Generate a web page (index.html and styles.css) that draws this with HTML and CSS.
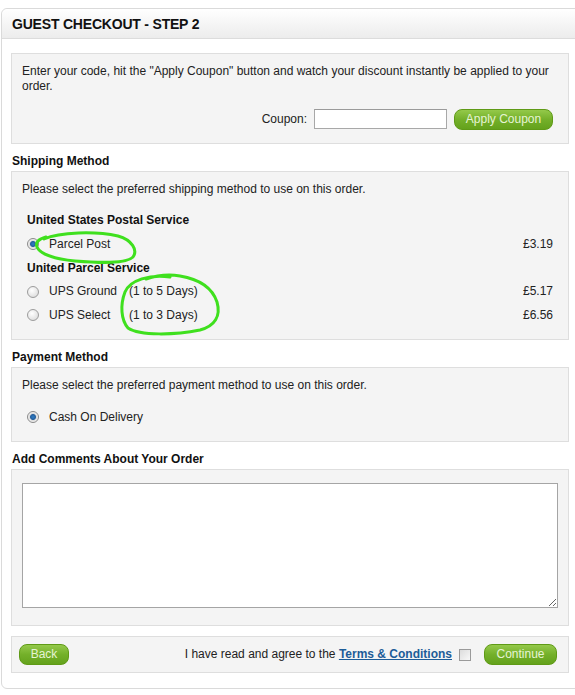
FILE: index.html
```html
<!DOCTYPE html>
<html>
<head>
<meta charset="utf-8">
<title>Guest Checkout - Step 2</title>
<link rel="stylesheet" href="styles.css">
</head>
<body>
<div class="page">
  <div class="panel">
    <div class="panel-head"><h1>GUEST CHECKOUT - STEP 2</h1></div>
    <div class="panel-body">
      <div class="box coupon-box">
        <p class="intro">Enter your code, hit the "Apply Coupon" button and watch your discount instantly be applied to your order.</p>
        <div class="coupon-row">
          <label class="coupon-label">Coupon:</label>
          <input class="coupon-input" type="text">
          <button class="btn btn-apply">Apply Coupon</button>
        </div>
      </div>

      <h2 class="section-title">Shipping Method</h2>
      <div class="box">
        <p class="desc">Please select the preferred shipping method to use on this order.</p>
        <div class="options">
          <div class="opt-row opt-head h23">United States Postal Service</div>
          <div class="opt-row h24">
            <span class="radio checked"></span><span class="opt-name">Parcel Post</span><span class="opt-note"></span><span class="price">£3.19</span>
          </div>
          <div class="opt-row opt-head h24">United Parcel Service</div>
          <div class="opt-row h23">
            <span class="radio"></span><span class="opt-name">UPS Ground</span><span class="opt-note">(1 to 5 Days)</span><span class="price">£5.17</span>
          </div>
          <div class="opt-row h24">
            <span class="radio"></span><span class="opt-name">UPS Select</span><span class="opt-note">(1 to 3 Days)</span><span class="price">£6.56</span>
          </div>
        </div>
      </div>

      <h2 class="section-title">Payment Method</h2>
      <div class="box">
        <p class="desc">Please select the preferred payment method to use on this order.</p>
        <div class="options">
          <div class="opt-row h24">
            <span class="radio checked"></span><span class="opt-name wide">Cash On Delivery</span>
          </div>
        </div>
      </div>

      <h2 class="section-title">Add Comments About Your Order</h2>
      <div class="box comments-box">
        <textarea class="comments"></textarea>
      </div>

      <div class="box actions">
        <button class="btn btn-back">Back</button>
        <div class="agree">
          <span>I have read and agree to the <a class="terms" href="#">Terms &amp; Conditions</a></span>
          <span class="checkbox"></span>
          <button class="btn btn-continue">Continue</button>
        </div>
      </div>
    </div>
  </div>

  <svg class="marks" width="575" height="695" viewBox="0 0 575 695">
    <path d="M44 239 C60 232 95 231 118 236 C132 240 138 250 133 257 C126 264 100 263 75 261 C55 259 40 254 37 247 C35 242 39 239 46 237" />
    <path d="M170 277 C150 274 130 280 125 292 C120 305 121 320 128 328 C140 336 175 335 200 330 C215 326 221 316 217 302 C212 287 198 279 180 276 C168 274 155 276 146 279" />
  </svg>
</div>
</body>
</html>
```

FILE: styles.css
```css
html, body {
  margin: 0;
  padding: 0;
  background: #ffffff;
}

body {
  font-family: "Liberation Sans", Arial, sans-serif;
  font-size: 12px;
  line-height: 15px;
  color: #222222;
}

.page {
  position: relative;
  width: 575px;
  height: 695px;
  overflow: hidden;
}

.panel {
  margin: 8px 0 0 1px;
  width: 620px;
  border: 1px solid #dadada;
  border-radius: 6px;
  background: #ffffff;
}

.panel-head {
  height: 29px;
  border-bottom: 1px solid #dcdcdc;
  border-radius: 6px 0 0 0;
  background: linear-gradient(#ffffff, #ececec);
  display: flex;
  align-items: center;
}

.panel-head h1 {
  margin: 0 0 0 10px;
  font-size: 14px;
  font-weight: bold;
  color: #111111;
  line-height: 16px;
  letter-spacing: -0.2px;
}

.panel-body {
  width: 558px;
  padding: 14px 0 15px 9px;
}

.box {
  border: 1px solid #dedede;
  background: #f4f4f4;
  padding: 10px 10px 12px 10px;
}

.coupon-box {
  padding-bottom: 14px;
}

.intro, .desc {
  margin: 0;
}

.desc {
  margin-bottom: 12px;
}

.coupon-row {
  margin-top: 15px;
  display: flex;
  justify-content: flex-end;
  align-items: center;
  padding-right: 5px;
  height: 20px;
}

.coupon-label {
  margin-right: 7px;
}

.coupon-input {
  box-sizing: border-box;
  width: 133px;
  height: 20px;
  margin: 0 7px 0 0;
  border: 1px solid #a8a8a8;
  border-top-color: #9a9a9a;
  background: #ffffff;
  padding: 0 3px;
}

.btn {
  box-sizing: border-box;
  height: 21px;
  border: 1px solid #5f9a16;
  border-radius: 8px;
  background: linear-gradient(#94c94a, #74b02a 50%, #64a21c);
  color: #e6f4d4;
  font-family: "Liberation Sans", Arial, sans-serif;
  font-size: 12px;
  padding: 0;
  line-height: 19px;
  text-align: center;
}

.btn-apply {
  width: 99px;
}

.btn-back {
  width: 50px;
}

.btn-continue {
  width: 73px;
  margin-left: 13px;
}

.section-title {
  margin: 10px 0 2px 1px;
  font-size: 12px;
  font-weight: bold;
  line-height: 15px;
  color: #111111;
}

.options {
  padding: 0 5px;
}

.opt-row {
  display: flex;
  align-items: center;
}

.h23 { height: 23px; }
.h24 { height: 24px; }

.opt-head {
  font-weight: bold;
  color: #111111;
}

.radio {
  box-sizing: border-box;
  width: 12px;
  height: 12px;
  border-radius: 50%;
  border: 1px solid #9c9c9c;
  background: radial-gradient(circle at 40% 35%, #ffffff, #e2e2e2 70%, #cfcfcf);
  margin: 0 10px 0 0;
  flex: none;
  position: relative;
}

.radio.checked {
  border-color: #8a8a8a;
  background: radial-gradient(circle at 50% 50%, #2f7fc8 0, #245e9c 2.5px, #dcdcdc 3.5px, #f2f2f2 70%);
}

.opt-name {
  width: 80px;
  flex: none;
}

.opt-name.wide {
  width: auto;
}

.opt-note {
  flex: 1;
}

.price {
  margin-left: auto;
}

.comments-box {
  padding: 13px 10px 17px 10px;
}

.comments {
  display: block;
  box-sizing: border-box;
  width: 100%;
  height: 125px;
  margin: 0;
  border: 1px solid #a5a5a5;
  background: #ffffff;
  font-family: "Liberation Sans", Arial, sans-serif;
  font-size: 12px;
}

.actions {
  margin-top: 10px;
  height: 35px;
  padding: 0 11px 0 7px;
  display: flex;
  align-items: center;
  justify-content: space-between;
}

.agree {
  display: flex;
  align-items: center;
}

.terms {
  color: #1d5c98;
  font-weight: bold;
  text-decoration: underline;
}

.checkbox {
  box-sizing: border-box;
  width: 12px;
  height: 12px;
  border: 1px solid #9a9a9a;
  background: linear-gradient(135deg, #dcdcdc, #f8f8f8);
  margin-left: 7px;
}

.marks {
  position: absolute;
  left: 0;
  top: 0;
  pointer-events: none;
}

.marks path {
  fill: none;
  stroke: #3fe01e;
  stroke-width: 3;
  stroke-linecap: round;
  stroke-linejoin: round;
}
```
